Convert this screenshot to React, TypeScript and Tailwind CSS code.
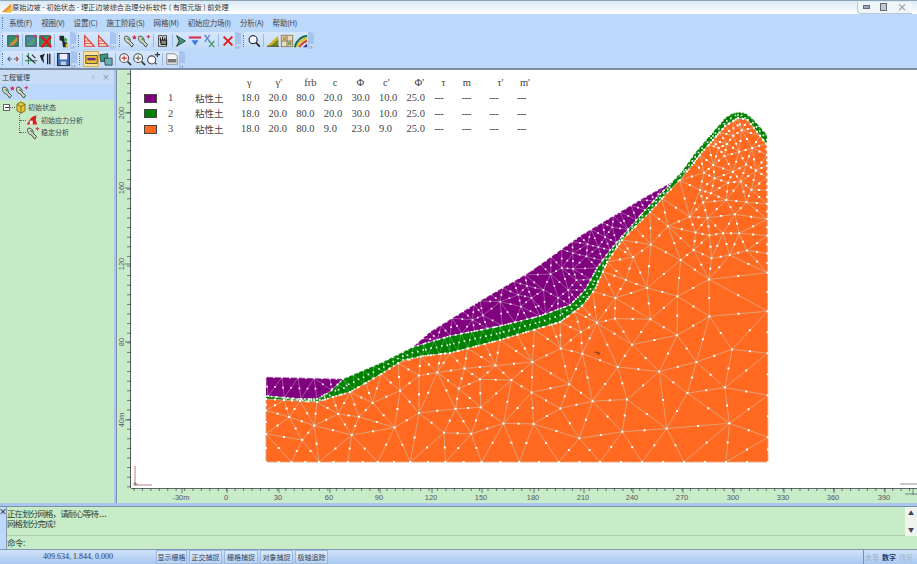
import React, { useMemo } from "react";

type P = [number, number];

const T1: P[] = [[266,377],[343,379]];
const T2: P[] = [[343,379],[383,362],[413,347]];
const T3: P[] = [[413,347],[430,332],[480,301],[530,272],[580,236],[620,212],[640,200],[672,182]];
const T4: P[] = [[672,182],[683,170],[695,153],[713,132],[725,118],[733,113],[738,112],[745,113],[752,118],[767,135]];
const PB1: P[] = [[266,396],[300,399],[317,399],[330,392],[343,379]];
const PB2: P[] = [[413,347],[450,336],[500,326],[540,316],[570,305],[585,290],[597,268],[610,250],[625,233],[645,210],[672,182]];
const GB: P[] = [[266,399],[300,401],[317,402],[333,397],[350,392],[383,373],[403,360],[423,356],[450,353],[500,340],[560,322],[582,306],[596,288],[607,262],[622,240],[640,222],[650,212],[667,193],[683,177],[702,152],[713,140],[725,126],[738,118],[748,120],[767,145]];

const PURPLE_A: P[] = [...T1, ...PB1.slice().reverse().slice(1)];
const PURPLE_B: P[] = [...T3, ...PB2.slice().reverse().slice(1, -1)];
const GREEN: P[] = [...PB1, ...T2.slice(1), ...PB2.slice(1), ...T4.slice(1), ...GB.slice().reverse()];
const ORANGE: P[] = [...GB, [768,462],[266,462]];

const inPoly = (p: P, poly: P[]) => {
  let c = false;
  for (let i = 0, j = poly.length - 1; i < poly.length; j = i++) {
    const [xi, yi] = poly[i], [xj, yj] = poly[j];
    if (yi > p[1] !== yj > p[1] && p[0] < ((xj - xi) * (p[1] - yi)) / (yj - yi) + xi) c = !c;
  }
  return c;
};
const distLine = (p: P, line: P[]) => {
  let best = 1e9;
  for (let i = 0; i < line.length - 1; i++) {
    const [ax, ay] = line[i], [bx, by] = line[i + 1];
    const dx = bx - ax, dy = by - ay;
    const t = Math.max(0, Math.min(1, ((p[0] - ax) * dx + (p[1] - ay) * dy) / (dx * dx + dy * dy)));
    best = Math.min(best, Math.hypot(p[0] - ax - t * dx, p[1] - ay - t * dy));
  }
  return best;
};
const delaunay = (pts: P[]) => {
  const n = pts.length;
  const all: P[] = [...pts, [-5000, -5000], [6000, -5000], [500, 7000]];
  let tris: { a: number; b: number; c: number; x: number; y: number; r: number }[] = [];
  const mk = (a: number, b: number, c: number) => {
    const [ax, ay] = all[a], [bx, by] = all[b], [cx, cy] = all[c];
    const d = 2 * (ax * (by - cy) + bx * (cy - ay) + cx * (ay - by)) || 1e-9;
    const ux = ((ax * ax + ay * ay) * (by - cy) + (bx * bx + by * by) * (cy - ay) + (cx * cx + cy * cy) * (ay - by)) / d;
    const uy = ((ax * ax + ay * ay) * (cx - bx) + (bx * bx + by * by) * (ax - cx) + (cx * cx + cy * cy) * (bx - ax)) / d;
    return { a, b, c, x: ux, y: uy, r: (ax - ux) ** 2 + (ay - uy) ** 2 };
  };
  tris.push(mk(n, n + 1, n + 2));
  for (let i = 0; i < n; i++) {
    const [x, y] = all[i];
    const edges = new Map<string, [number, number]>();
    const keep: typeof tris = [];
    for (const t of tris) {
      if ((x - t.x) ** 2 + (y - t.y) ** 2 < t.r) {
        for (const [u, v] of [[t.a, t.b], [t.b, t.c], [t.c, t.a]]) {
          const k = u < v ? `${u}_${v}` : `${v}_${u}`;
          if (edges.has(k)) edges.delete(k);
          else edges.set(k, [u, v]);
        }
      } else keep.push(t);
    }
    for (const [u, v] of edges.values()) keep.push(mk(u, v, i));
    tris = keep;
  }
  return tris.filter((t) => t.a < n && t.b < n && t.c < n).map((t) => [t.a, t.b, t.c]);
};
const buildMesh = (poly: P[], rFn: (p: P) => number, seed: number, tries: number, dr = 1) => {
  let s = seed;
  const rnd = () => ((s = (s * 16807) % 2147483647) - 1) / 2147483646;
  const pts: P[] = [];
  const ok = (p: P, f = 1) => pts.every((q) => Math.hypot(q[0] - p[0], q[1] - p[1]) >= rFn(p) * f);
  for (let i = 0; i < poly.length; i++) {
    const a = poly[i], b = poly[(i + 1) % poly.length];
    const len = Math.hypot(b[0] - a[0], b[1] - a[1]);
    let d = 0;
    while (d < len) {
      const p: P = [a[0] + ((b[0] - a[0]) * d) / len, a[1] + ((b[1] - a[1]) * d) / len];
      if (ok(p, 0.45)) pts.push(p);
      d += rFn(p);
    }
  }
  let minX = 1e9, maxX = -1e9, minY = 1e9, maxY = -1e9;
  poly.forEach(([x, y]) => { minX = Math.min(minX, x); maxX = Math.max(maxX, x); minY = Math.min(minY, y); maxY = Math.max(maxY, y); });
  for (let i = 0; i < tries; i++) {
    const p: P = [minX + rnd() * (maxX - minX), minY + rnd() * (maxY - minY)];
    if (inPoly(p, poly) && ok(p, 0.85)) pts.push(p);
  }
  const tris = delaunay(pts).filter(([a, b, c]) => inPoly([(pts[a][0] + pts[b][0] + pts[c][0]) / 3, (pts[a][1] + pts[b][1] + pts[c][1]) / 3], poly));
  const seen = new Set<string>();
  const nodeSet = new Set<number>();
  let lines = "", dots = "";
  const dot = (x: number, y: number) => { dots += `M${(x - dr).toFixed(1)} ${(y - dr).toFixed(1)}h${2 * dr}v${2 * dr}h${-2 * dr}z`; };
  for (const t of tris) {
    for (const [u, v] of [[t[0], t[1]], [t[1], t[2]], [t[2], t[0]]]) {
      const k = u < v ? `${u}_${v}` : `${v}_${u}`;
      nodeSet.add(u); nodeSet.add(v);
      if (seen.has(k)) continue;
      seen.add(k);
      lines += `M${pts[u][0].toFixed(1)} ${pts[u][1].toFixed(1)}L${pts[v][0].toFixed(1)} ${pts[v][1].toFixed(1)}`;
      dot((pts[u][0] + pts[v][0]) / 2, (pts[u][1] + pts[v][1]) / 2);
    }
  }
  nodeSet.forEach((i) => dot(pts[i][0], pts[i][1]));
  return { lines, dots };
};
const pathOf = (poly: P[]) => "M" + poly.map((p) => p.join(" ")).join("L") + "Z";

function SlopeChart() {
  const m = useMemo(() => {
    const orangeR = (p: P) => {
      const d = distLine(p, GB);
      const base = Math.min(42, 18 + 0.16 * d);
      return p[0] > 690 && p[1] < 260 ? Math.max(9, base * 0.55) : base;
    };
    return {
      o: buildMesh(ORANGE, orangeR, 12345, 4000, 1),
      pa: buildMesh(PURPLE_A, () => 16, 777, 300, 0.85),
      pb: buildMesh(PURPLE_B, () => 13, 4242, 2000, 0.85),
      g: buildMesh(GREEN, () => 11, 991, 800, 0.8),
    };
  }, []);
  return (
    <svg viewBox="131 70 786 418" className="block w-full h-full">
      <path d={pathOf(ORANGE)} fill="#ff6a20" />
      <path d={pathOf(GREEN)} fill="#008000" />
      <path d={pathOf(PURPLE_A)} fill="#800080" />
      <path d={pathOf(PURPLE_B)} fill="#800080" />
      <path d={m.o.lines} stroke="#dca57f" strokeWidth="0.9" fill="none" />
      <path d={m.pa.lines + m.pb.lines} stroke="#c49ac4" strokeWidth="0.5" fill="none" />
      <path d={m.g.lines} stroke="#8cc88c" strokeWidth="0.4" fill="none" />
      <path d={m.o.dots} fill="#fff" />
      <path d={m.pa.dots + m.pb.dots + m.g.dots} fill="#fff" opacity="0.95" />
      <path d="M594 352l6 1M597 354l3 0" stroke="#333" strokeWidth="0.7" />
      <path d="M135 466V485H152" stroke="#b06060" strokeWidth="0.8" fill="none" />
      <path d="M133 484H138M135 482V486" stroke="#555" strokeWidth="0.6" />
      <path d="M900 484H917" stroke="#444" strokeWidth="0.6" />
    </svg>
  );
}

const vLabels: [number, string][] = [[113, "200"], [188, "160"], [264, "120"], [342, "80"], [420, "40m"]];
function VRuler() {
  const ticks = [];
  for (let y = 74; y < 488; y += 9.6) ticks.push(y);
  return (
    <svg viewBox="117 70 14 418" className="block w-[14px] h-full shrink-0">
      <path d={ticks.map((y) => `M127 ${y}H131`).join("") + vLabels.map(([y]) => `M125 ${y}H131`).join("")} stroke="#445" strokeWidth="0.7" />
      <path d="M130.5 70V488" stroke="#334" strokeWidth="0.8" />
      {vLabels.map(([y, t]) => (
        <text key={t} x={0} y={0} transform={`translate(124 ${y}) rotate(-90)`} textAnchor="middle" fontSize="7.5" fill="#556" fontFamily="Liberation Sans, sans-serif">{t}</text>
      ))}
    </svg>
  );
}
const hLabels: [number, string][] = [[181, "-30m"], [226, "0"], [278, "30"], [329, "60"], [379, "90"], [431, "120"], [481, "150"], [533, "180"], [583, "210"], [632, "240"], [682, "270"], [733, "300"], [783, "330"], [833, "360"], [884, "390"]];
function HRuler() {
  const ticks = [];
  for (let x = 134; x < 917; x += 8.43) ticks.push(x);
  return (
    <svg viewBox="117 488 800 15" className="block w-full h-[15px]">
      <path d={ticks.map((x) => `M${x} 488V491`).join("") + hLabels.map(([x]) => `M${x + 1} 488V493`).join("")} stroke="#445" strokeWidth="0.7" />
      <path d="M131 488.4H917" stroke="#334" strokeWidth="0.8" />
      <path d="M913 483V495M905 494H917" stroke="#556" strokeWidth="0.7" />
      {hLabels.map(([x, t]) => (
        <text key={t} x={x} y={500} textAnchor="middle" fontSize="7.5" fill="#556" fontFamily="Liberation Sans, sans-serif">{t}</text>
      ))}
    </svg>
  );
}

const Ic = ({ children, w = 14 }: { children: React.ReactNode; w?: number }) => (
  <svg width={w} height={w} viewBox="0 0 16 16" className="block shrink-0">{children}</svg>
);
const MapIc = ({ a = "#d98a3a", b = "#2f8f6f", x = false, star = true }: any) => (
  <Ic>
    <rect x="2" y="2" width="12" height="12" fill={b} stroke="#2b4a3f" />
    <path d="M3 13L13 3V8L8 13Z" fill={a} />
    {star && <path d="M13 0l1 2 2 .5-2 1-1 2-1-2-2-1 2-.5z" fill="#e0306a" />}
    {x && <path d="M4 3L15 15M15 3L4 15" stroke="#e01818" strokeWidth="2.6" />}
  </Ic>
);
const FigIc = () => (
  <Ic>
    <path d="M4 2L9 2L10 9L13 10L13 15L8 15L7 8L4 7Z" fill="#1f2a2a" />
    <path d="M10 4L13 6L12 9L9 7Z" fill="#3aa04a" />
    <rect x="11" y="11" width="3" height="4" fill="#e8c020" />
  </Ic>
);
const TriIc = ({ c = "#d8403a" }: any) => (
  <Ic>
    <path d="M3 2V14H14Z" fill="#fde8d8" stroke={c} strokeWidth="1.3" />
    <path d="M3 8H8M3 11H11" stroke={c} strokeWidth="1" />
  </Ic>
);
const NodeIc = ({ star = true }: any) => (
  <Ic>
    <path d="M2 3C5 1 9 5 8 8L12 12L10 15L6 10C3 10 1 6 2 3Z" fill="#cfd8c8" stroke="#3d4a3a" strokeWidth="1.1" />
    <path d="M5 5L7 7" stroke="#3a8a4a" strokeWidth="1.5" />
    {star ? <path d="M13 1l.9 1.8 2 .4-1.5 1.2.3 2-1.7-1-1.7 1 .3-2L10 3.2l2-.4z" fill="#e02040" /> : <path d="M11 3H15M13 1V5" stroke="#d04060" strokeWidth="1.3" />}
  </Ic>
);
const HandIc = () => (
  <Ic>
    <rect x="3" y="2" width="9" height="12" fill="#e8e8e8" stroke="#333" />
    <path d="M5 7V4M7.5 7V3M10 7V4M5 7L12 7V12H6Z" stroke="#222" strokeWidth="1.4" fill="#888" />
  </Ic>
);
const ArrIc = () => (
  <Ic>
    <path d="M3 2L13 8L3 14L6 8Z" fill="#3f9a7a" stroke="#2a3a3a" />
    <path d="M3 2L6 8L3 14" fill="#c8d8c8" stroke="#2a3a3a" />
  </Ic>
);
const FunnelIc = () => (
  <Ic>
    <path d="M1 4H15" stroke="#d83050" strokeWidth="2.4" />
    <path d="M4 7H12L8 13Z" fill="#3a7ae0" />
  </Ic>
);
const XXIc = () => (
  <Ic>
    <path d="M3 1L9 9M9 1L3 9" stroke="#5a8ac8" strokeWidth="1.6" />
    <path d="M8 8L14 15M14 8L8 15" stroke="#4a9a6a" strokeWidth="1.6" />
  </Ic>
);
const RedX = () => (
  <Ic><path d="M3 3L13 13M13 3L3 13" stroke="#e01818" strokeWidth="2.2" /></Ic>
);
const LensIc = () => (
  <Ic>
    <circle cx="7" cy="6.5" r="4.6" fill="#f2f8ff" stroke="#334" strokeWidth="1.4" />
    <path d="M10.5 10L14.5 14.5" stroke="#222" strokeWidth="2" />
  </Ic>
);
const WedgeIc = () => (
  <Ic>
    <path d="M1 14L14 2V14Z" fill="#d8b020" />
    <path d="M5 14L14 6V14Z" fill="#6a8a20" />
    <path d="M1 14H15" stroke="#333" />
  </Ic>
);
const GridIc = () => (
  <Ic>
    <rect x="1.5" y="1.5" width="13" height="13" fill="#e8dcc0" stroke="#8a7a50" />
    <rect x="3" y="3" width="4" height="4" fill="#c89a50" />
    <rect x="9" y="9" width="4" height="4" fill="#80a060" />
    <path d="M8 1.5V14.5M1.5 8H14.5" stroke="#7a6a40" />
  </Ic>
);
const RainIc = () => (
  <Ic>
    <path d="M1 15C3 7 8 3 15 2" stroke="#1a6a50" strokeWidth="2.4" fill="none" />
    <path d="M3 15C5 10 9 6 15 5" stroke="#e0c020" strokeWidth="2.2" fill="none" />
    <path d="M6 15C8 12 11 9 15 8" stroke="#e04020" strokeWidth="2.2" fill="none" />
    <path d="M10 15L15 11V15Z" fill="#303080" />
  </Ic>
);
const SwapIc = () => (
  <Ic>
    <path d="M2 8H7M2 8L4.5 5.5M2 8L4.5 10.5" stroke="#4a6a8a" strokeWidth="1.3" fill="none" />
    <path d="M9 8H14M14 8L11.5 5.5M14 8L11.5 10.5" stroke="#a05050" strokeWidth="1.3" fill="none" />
  </Ic>
);
const AxisIc = () => (
  <Ic>
    <path d="M5 1V14M1 10H15" stroke="#2a7a4a" strokeWidth="1.1" />
    <path d="M3 4L13 13M9 3L13 7" stroke="#222" strokeWidth="1.2" />
  </Ic>
);
const BlackArrow = () => (
  <Ic>
    <path d="M2 4L8 2L6 6L7 13L4 9Z" fill="#222" />
    <path d="M11 2V14M13.5 2V14" stroke="#222" strokeWidth="1.5" />
  </Ic>
);
const SaveIc = () => (
  <Ic w={15}>
    <rect x="1.5" y="1.5" width="13" height="13" fill="#3a6ab0" stroke="#223" />
    <rect x="4" y="2" width="8" height="6" fill="#eef" />
    <rect x="5" y="10" width="6" height="4" fill="#bcd" />
  </Ic>
);
const WinIc = () => (
  <span className="w-[16px] h-[16px] flex items-center justify-center bg-[#fbdf9c] border border-[#d8b060] shrink-0">
    <Ic w={13}>
      <rect x="1" y="3" width="14" height="10" fill="#e8c030" stroke="#444" />
      <rect x="3" y="6" width="10" height="3" fill="#6a2a8a" />
    </Ic>
  </span>
);
const SheetIc = () => (
  <Ic>
    <path d="M1 3L10 2L10 10L2 11Z" fill="#3a9a7a" stroke="#223" strokeWidth="0.8" />
    <path d="M6 7L15 7L15 15L7 15Z" fill="#6ab0b0" stroke="#223" strokeWidth="0.8" />
  </Ic>
);
const ZoomIc = ({ c = "#d03030" }: any) => (
  <Ic>
    <circle cx="7" cy="7" r="5" fill="#fff" stroke="#444" strokeWidth="1.2" />
    <path d="M4 7H10M7 4V10" stroke={c} strokeWidth="1.3" />
    <path d="M11 11L15 15" stroke="#333" strokeWidth="1.8" />
  </Ic>
);
const ZoomAll = () => (
  <Ic>
    <circle cx="6.5" cy="9" r="4.6" fill="#fff" stroke="#445" strokeWidth="1.2" />
    <path d="M10 12L12 14" stroke="#445" strokeWidth="1.5" />
    <path d="M13 0V6M10 3H16" stroke="#303030" strokeWidth="1.2" />
  </Ic>
);
const DxfIc = () => (
  <Ic>
    <path d="M2 2H11L14 5V14H2Z" fill="#f4f4f4" stroke="#888" />
    <rect x="3" y="8" width="10" height="4" fill="#777" />
  </Ic>
);

const Grip = () => (
  <span className="w-[4px] h-[12px] shrink-0 border-l border-dotted border-[#5878a8] ml-[1px]" />
);
const Sep = ({ w = "w-[4px]" }: { w?: string }) => (
  <span className={`${w} flex justify-center shrink-0`}><span className="w-px h-[13px] bg-[#9fbbe0]" /></span>
);
const End = () => (
  <span className="w-[6px] h-[17px] shrink-0 ml-auto bg-[#a6c4ee] rounded-r-sm flex items-end justify-center pb-[2px]">
    <svg width="5" height="5" viewBox="0 0 5 5" className="block"><path d="M0 3H5M1 5L4 5L2.5 3.5Z" stroke="#fff" fill="#246" strokeWidth="0.7" /></svg>
  </span>
);
const Group = ({ w, children }: { w: string; children: React.ReactNode }) => (
  <div className={`${w} h-[17px] flex items-center shrink-0 bg-gradient-to-b from-[#d6e7fc] to-[#c2dbf9] rounded-l-sm`}>{children}</div>
);

const Menu = ["系统(F)", "视图(V)", "设置(C)", "施工阶段(S)", "网格(M)", "初始应力场(I)", "分析(A)", "帮助(H)"];
const headers: [string, string][] = [["γ", "pl-[6px]"], ["γ'", "pl-[7px]"], ["frb", "pl-[8px]"], ["c", "pl-[9px]"], ["Φ", "pl-[5px]"], ["c'", "pl-[4px]"], ["Φ'", "pl-[8px]"], ["τ", "pl-[7px]"], ["m", "pl-[1px]"], ["τ'", "pl-[8px]"], ["m'", "pl-[3px]"]];
const rows = [
  { n: "1", bg: "bg-[#800080]", v: ["18.0", "20.0", "80.0", "20.0", "30.0", "10.0", "25.0"] },
  { n: "2", bg: "bg-[#008000]", v: ["18.0", "20.0", "80.0", "20.0", "30.0", "10.0", "25.0"] },
  { n: "3", bg: "bg-[#ff6a20]", v: ["18.0", "20.0", "80.0", "9.0", "23.0", "9.0", "25.0"] },
];
const Btn = ({ t, w }: { t: string; w: string }) => (
  <span className={`${w} h-[14px] flex items-center justify-center text-[7px] leading-none whitespace-nowrap text-[#33445a] bg-gradient-to-b from-[#dceafc] to-[#b8d2f4] border border-[#9db8dc] shrink-0`}>{t}</span>
);

export default function App() {
  const cjk = { fontFamily: '"Noto Sans CJK SC", "Liberation Sans", sans-serif' };
  return (
    <div className="w-[917px] h-[564px] overflow-hidden flex flex-col bg-[#bcd8fb] text-[#3a3f48]" style={cjk}>
      {/* title bar */}
      <div className="h-[14px] shrink-0 flex items-center bg-gradient-to-b from-[#dbe9f4] to-white border-t border-[#8aa4b8]">
        <svg width="11" height="11" viewBox="0 0 16 16" className="block ml-[1px] shrink-0">
          <path d="M1 15L15 2V15Z" fill="#f0902a" /><path d="M6 15L15 7V15Z" fill="#e8c040" />
        </svg>
        <span className="text-[7.2px] leading-none whitespace-nowrap text-[#333]">原始边坡 - 初始状态 - 理正边坡综合治理分析软件 ( 有限元版 ) 前处理</span>
        <div className="ml-auto mr-[5px] h-[12px] w-[55px] flex items-center justify-around border-l border-b border-[#b8c8d4] rounded-bl bg-[#eef6f8]">
          <span className="w-[7px] h-[4px] border border-[#667] bg-[#9ab]" />
          <span className="w-[7px] h-[8px] border border-[#667] bg-[#bcc]" />
          <span className="text-[10px] leading-none text-[#778]">×</span>
        </div>
      </div>
      {/* menu */}
      <div className="h-[17px] shrink-0 flex items-center pl-[2px]">
        <span className="w-[3px] h-[12px] border-l border-dotted border-[#5878a8] mr-[4px]" />
        <div className="flex gap-[9px] text-[7.5px] tracking-[-0.2px] leading-none whitespace-nowrap">
          {Menu.map((m) => <span key={m}>{m}</span>)}
        </div>
      </div>
      {/* toolbar 1 */}
      <div className="h-[19px] shrink-0 flex items-center pl-[1px]">
        <Group w="w-[74px]"><Grip /><MapIc /><Sep /><MapIc a="#50a070" b="#4a8aa0" /><MapIc x star={false} /><Sep /><FigIc /><End /></Group>
        <div className="w-[2px]" />
        <Group w="w-[38px]"><Grip /><TriIc /><TriIc c="#c84848" /><End /></Group>
        <div className="w-[3px]" />
        <Group w="w-[122px]"><Grip /><NodeIc /><NodeIc star={false} /><Sep w="w-[5px]" /><HandIc /><Sep /><ArrIc /><FunnelIc /><XXIc /><Sep w="w-[5px]" /><RedX /><End /></Group>
        <div className="w-[2px]" />
        <Group w="w-[70px]"><Grip /><LensIc /><Sep w="w-[5px]" /><WedgeIc /><GridIc /><RainIc /><End /></Group>
      </div>
      {/* toolbar 2 */}
      <div className="h-[18px] shrink-0 flex items-center pl-[1px]">
        <Group w="w-[74px]"><Grip /><SwapIc /><Sep /><AxisIc /><BlackArrow /><Sep /><SaveIc /><End /></Group>
        <div className="w-[3px]" />
        <Group w="w-[101px]"><Grip /><WinIc /><SheetIc /><Sep w="w-[5px]" /><ZoomIc /><ZoomIc c="#666" /><ZoomAll /><Sep w="w-[5px]" /><DxfIc /><End /></Group>
      </div>
      {/* main */}
      <div className="h-[435px] shrink-0 flex border-t-2 border-[#7d8fa5]">
        {/* left panel */}
        <div className="w-[114px] shrink-0 flex flex-col">
          <div className="h-[14px] flex items-center justify-between px-[2px] bg-[#c8dcf6] text-[7px] leading-none">
            <span>工程管理</span>
            <span className="flex items-center gap-[5px] pr-[2px] text-[8px] text-[#789]"><span>▫</span><span>×</span></span>
          </div>
          <div className="h-[16px] flex items-center pl-[1px] bg-[#bcd8fb]"><NodeIc /><NodeIc star={false} /></div>
          <div className="flex-1 bg-[#c6e9c6] pt-[1px] text-[7px] leading-none">
            <div className="h-[13px] flex items-center pl-[3px]">
              <span className="w-[7px] h-[7px] border border-[#667] bg-white flex items-center justify-center"><span className="w-[4px] h-px bg-[#333]" /></span>
              <span className="w-[5px] border-t border-dotted border-[#667]" />
              <svg width="12" height="13" viewBox="0 0 14 16" className="block shrink-0">
                <path d="M2 4L7 1L12 4V12L7 15L2 12Z" fill="#e8c838" stroke="#6a5a20" />
                <path d="M7 7V15M2 4L7 7L12 4" stroke="#6a5a20" fill="none" />
              </svg>
              <span className="ml-[1px]">初始状态</span>
            </div>
            <div className="ml-[19px] border-l border-dotted border-[#667] h-[19px] flex flex-col">
              <div className="h-[13px] flex items-center">
                <span className="w-[6px] border-t border-dotted border-[#667]" />
                <svg width="12" height="12" viewBox="0 0 16 16" className="block shrink-0">
                  <path d="M1 14L6 6L10 3L14 2L13 8L15 14Z" fill="#d82020" /><path d="M5 14V9H9V14" fill="#fff" />
                </svg>
                <span className="ml-[3px]">初始应力分析</span>
              </div>
              <div className="h-[13px] flex items-center">
                <span className="w-[6px] border-t border-dotted border-[#667]" />
                <NodeIc star={false} />
                <span className="ml-[1px]">稳定分析</span>
              </div>
            </div>
          </div>
        </div>
        {/* splitter */}
        <div className="w-[3px] shrink-0 bg-[#a9c6ee] border-r border-[#7d8fa5]" />
        {/* drawing area */}
        <div className="flex-1 min-w-0 flex flex-col bg-[#c8ecc8]">
          <div className="h-[418px] flex">
            <VRuler />
            <div className="relative flex-1 min-w-0 bg-white">
              <SlopeChart />
              <div className="absolute left-[13px] top-[5px] grid grid-cols-[24px_27px_46px_repeat(11,27.6px)] auto-rows-[15.5px] items-center text-[10.5px] leading-none text-[#444]" style={{ fontFamily: '"Liberation Serif", "Noto Sans CJK SC", serif' }}>
                <span /><span /><span />
                {headers.map(([h, c]) => <span key={h} className={c}>{h}</span>)}
                {rows.map((r) => (
                  <React.Fragment key={r.n}>
                    <span className={`w-[13px] h-[9px] border border-[#444] ${r.bg}`} />
                    <span>{r.n}</span>
                    <span className="text-[9.5px]" style={cjk}>粘性土</span>
                    {r.v.map((v, i) => <span key={i}>{v}</span>)}
                    {[0, 1, 2, 3].map((i) => <span key={i} className="tracking-[-0.5px]">---</span>)}
                  </React.Fragment>
                ))}
              </div>
            </div>
          </div>
          <HRuler />
        </div>
      </div>
      {/* splitter */}
      <div className="h-[4px] shrink-0 bg-[#a9c6ee] border-b border-[#7d8fa5]" />
      {/* command */}
      <div className="h-[42px] shrink-0 flex bg-[#c8ecc8]">
        <div className="w-[7px] shrink-0 flex justify-center bg-[#bcd8fb] border-r border-[#8a9aaa] text-[8px] leading-[10px] font-bold text-[#334]">×</div>
        <div className="flex-1 min-w-0 flex flex-col">
          <div className="h-[29px] pt-[1px] text-[8.5px] tracking-[-0.9px] leading-[10px] text-[#2f3f35] border-b border-[#aed0ae] whitespace-nowrap">
            <div>正在划分网格，请耐心等待 . . .</div>
            <div>网格划分完成！</div>
          </div>
          <div className="flex-1 flex items-center text-[8.5px] tracking-[-0.5px] leading-none text-[#2f3f35]">命令:</div>
        </div>
        <div className="w-[12px] shrink-0 flex flex-col items-center pt-[3px] gap-[11px] bg-[#f0f4f0] text-[6px] leading-none text-[#445] h-[29px]">
          <span>▲</span><span>▼</span>
        </div>
      </div>
      {/* status */}
      <div className="flex-1 flex items-center gap-[2px] bg-gradient-to-b from-[#cfe2fa] to-[#a9c8f0] border-t border-[#8098b8] border-b border-b-[#6a7a90] pl-[2px]">
        <span className="w-[152px] h-[14px] flex items-center justify-center text-[8px] text-[#334] shrink-0" style={{ fontFamily: '"Liberation Serif", serif' }}>409.634, 1.844, 0.000</span>
        <Btn t="显示栅格" w="w-[31px]" />
        <Btn t="正交捕捉" w="w-[33px]" />
        <Btn t="栅格捕捉" w="w-[34px]" />
        <Btn t="对象捕捉" w="w-[33px]" />
        <Btn t="极轴追踪" w="w-[33px]" />
        <div className="ml-auto flex items-center h-full text-[7px] whitespace-nowrap leading-none border-l border-[#7a8fa8] pl-[1px]">
          <span className="w-[17px] text-[#99a8b8]">大写</span>
          <span className="w-[17px] text-[#1f3a6a] font-bold">数字</span>
          <span className="w-[18px] text-[#a8b4c4]">改写</span>
        </div>
      </div>
    </div>
  );
}
